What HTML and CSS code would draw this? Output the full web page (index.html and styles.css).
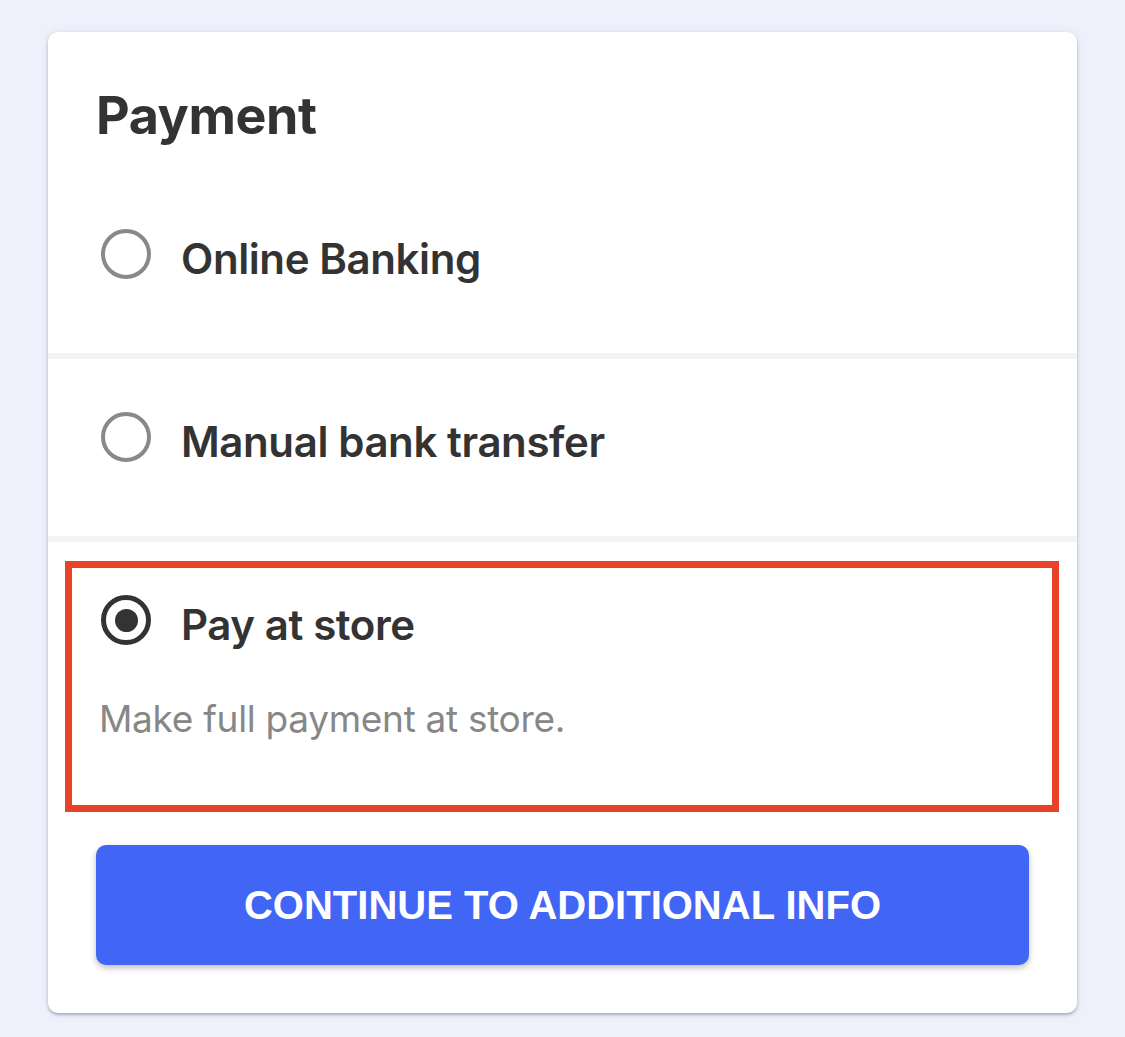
FILE: index.html
```html
<!DOCTYPE html>
<html lang="en">
<head>
  <meta charset="UTF-8">
  <meta name="viewport" content="width=device-width, initial-scale=1.0">
  <title>Payment</title>
  <link rel="stylesheet" href="styles.css">
</head>
<body>
  <div class="card">
    <div class="card-header">
      <h2 class="card-title">Payment</h2>
    </div>

    <label class="option">
      <input type="radio" name="payment" class="radio">
      <span class="option-label">Online Banking</span>
    </label>

    <label class="option">
      <input type="radio" name="payment" class="radio">
      <span class="option-label">Manual bank transfer</span>
    </label>

    <div class="option-wrap">
      <label class="option-selected">
        <span class="option-row">
          <input type="radio" name="payment" class="radio" checked>
          <span class="option-label">Pay at store</span>
        </span>
        <span class="option-desc">Make full payment at store.</span>
      </label>
    </div>

    <div class="actions">
      <button class="btn-continue">CONTINUE TO ADDITIONAL INFO</button>
    </div>
  </div>
</body>
</html>
```

FILE: styles.css
```css
body {
  margin: 0;
  padding: 32px 48px 24px;
  background-color: #eef0fb;
  font-family: 'Inter', 'Noto Sans', sans-serif;
  color: #333;
}
.card {
  background: #fff;
  border-radius: 10px;
  box-shadow: 0 2px 3px rgba(60, 60, 90, 0.35), 0 0 8px rgba(60, 60, 120, 0.08);
  padding-bottom: 48px;
}
.card-header {
  padding: 56px 48px 33px;
}
.card-title {
  margin: 0;
  font-size: 52px;
  line-height: 55px;
  font-weight: 700;
  letter-spacing: -0.4px;
}
/* Options */
.option {
  display: flex;
  align-items: center;
  padding: 53px 48px 74px 53px;
  border-bottom: 6px solid #f3f3f3;
  cursor: pointer;
}
.option-row {
  display: flex;
  align-items: center;
}
.radio {
  appearance: none;
  -webkit-appearance: none;
  margin: 0;
  width: 50px;
  height: 50px;
  flex: none;
  border: 4px solid #898989;
  border-radius: 50%;
  background: #fff;
  position: relative;
}
.radio:checked {
  border: 5px solid #333;
}
.radio:checked::after {
  content: '';
  position: absolute;
  left: 50%;
  top: 50%;
  width: 23px;
  height: 23px;
  margin: -11.5px 0 0 -11.5px;
  border-radius: 50%;
  background: #333;
}
.option-label {
  margin-left: 30px;
  margin-top: 10px;
  font-size: 42px;
  line-height: 40px;
  font-weight: 600;
  letter-spacing: -0.4px;
}
.option-wrap {
  padding: 19px 18px 0 17px;
}
.option-selected {
  display: block;
  border: 7px solid #e8432a;
  padding: 27px 20px 62px 29px;
}
.option-desc {
  display: block;
  margin-top: 50px;
  margin-left: -2px;
  font-size: 37px;
  line-height: 48px;
  letter-spacing: -0.3px;
  color: #878787;
}
/* Button */
.actions {
  padding: 33px 48px 0;
}
.btn-continue {
  display: block;
  width: 100%;
  height: 120px;
  border: none;
  border-radius: 10px;
  background-color: #4166f5;
  color: #fff;
  font-family: 'Liberation Sans', Arial, sans-serif;
  font-weight: 700;
  font-size: 40px;
  box-shadow: 0 3px 6px rgba(0, 0, 0, 0.25);
  cursor: pointer;
}
```
